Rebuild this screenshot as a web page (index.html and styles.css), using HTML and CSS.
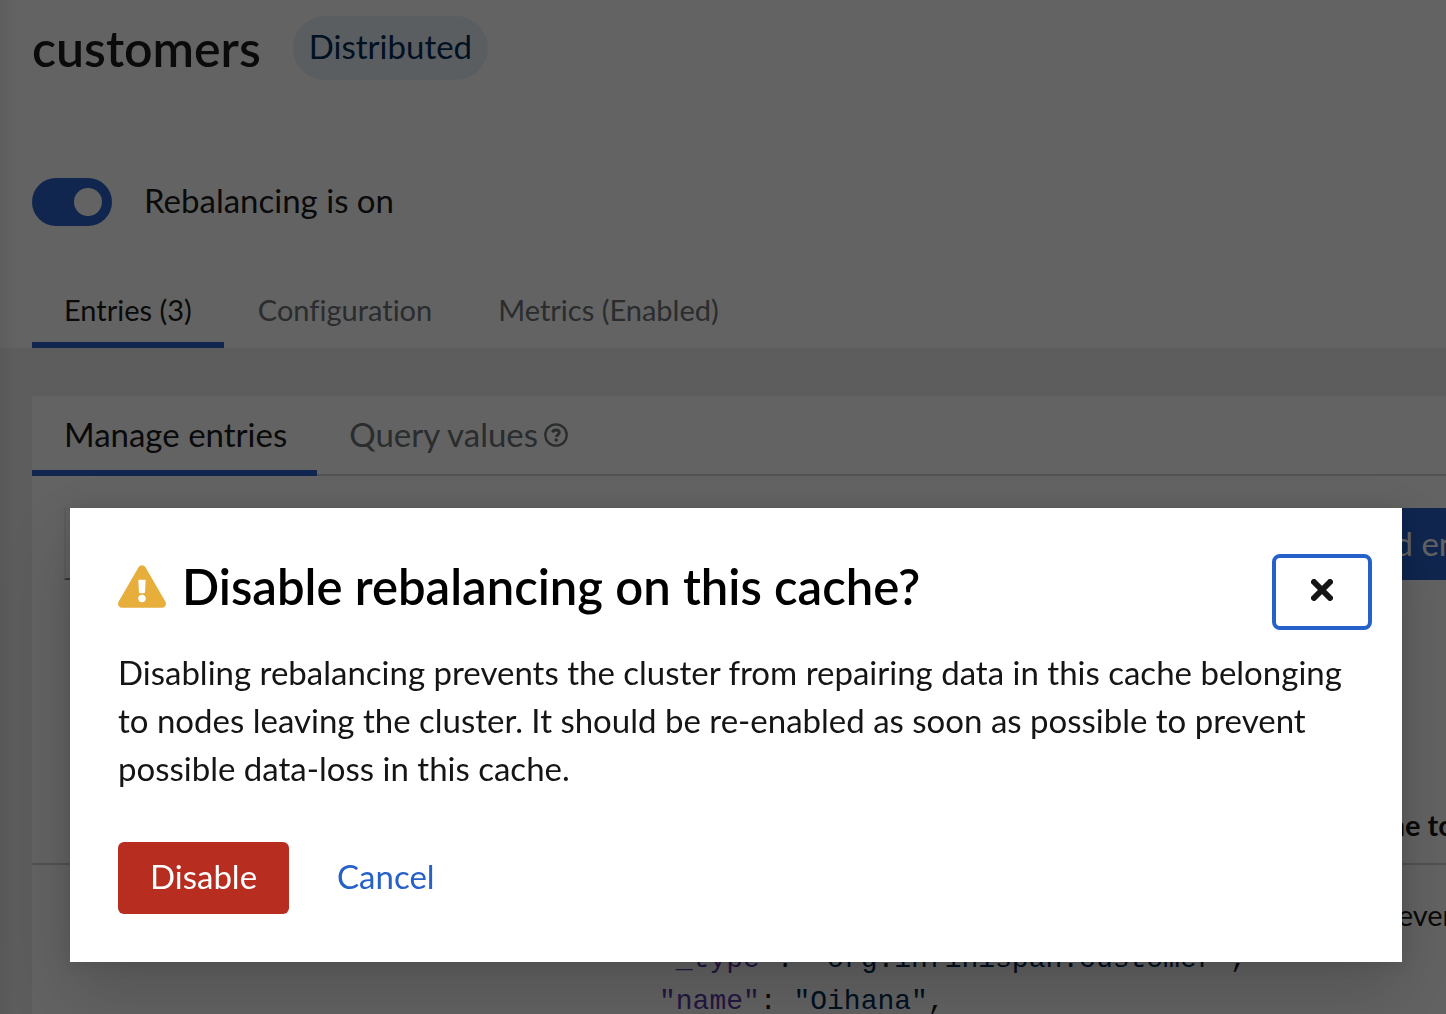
FILE: index.html
```html
<!DOCTYPE html>
<html lang="en">
<head>
<meta charset="utf-8">
<meta name="viewport" content="width=device-width, initial-scale=1">
<title>customers</title>
<link rel="stylesheet" href="styles.css">
</head>
<body>
<main class="page">
  <header class="page-header">
    <div class="title-row">
      <h1 class="page-title">customers</h1>
      <span class="badge">Distributed</span>
    </div>
    <label class="switch">
      <input class="switch-input" type="checkbox" role="switch" checked>
      <span class="switch-label">Rebalancing is on</span>
    </label>
    <nav class="tabs">
      <button class="tab tab-current" type="button">Entries (3)</button>
      <button class="tab" type="button">Configuration</button>
      <button class="tab" type="button">Metrics (Enabled)</button>
    </nav>
  </header>
  <section class="content">
    <div class="card">
      <nav class="tabs tabs-large">
        <button class="tab tab-current" type="button">Manage entries</button>
        <button class="tab" type="button">Query values<svg class="help-icon" viewBox="0 0 24 24" aria-hidden="true"><circle cx="12" cy="12" r="10.7" fill="none" stroke="currentColor" stroke-width="2.3"/><path d="M8.4 9.4C9.1 7.7 10.3 7 12 7c1.9 0 3.3 1 3.3 2.6 0 2.2-2.9 2.2-2.9 4.4" fill="none" stroke="currentColor" stroke-width="2.8"/><circle cx="12.2" cy="17" r="1.8" fill="currentColor"/></svg></button>
      </nav>
      <div class="toolbar">
        <input class="filter" type="text" aria-label="Filter entries">
        <button class="add" type="button">Add entry</button>
      </div>
      <table class="entries">
        <thead>
          <tr><th class="col-key"></th><th class="col-value"></th><th class="col-time">Time to live</th></tr>
        </thead>
        <tbody>
          <tr>
            <td></td>
            <td class="value"><pre class="code"><span class="prop">"_type"</span>: <span class="str">"org.infinispan.customer"</span>,
<span class="prop">"name"</span>: <span class="str">"Oihana"</span>,</pre></td>
            <td class="time">Never</td>
          </tr>
        </tbody>
      </table>
    </div>
  </section>
</main>
<div class="backdrop">
  <div class="modal" role="dialog" aria-modal="true" aria-labelledby="modal-title">
    <header class="modal-header">
      <svg class="warning-icon" viewBox="0 0 576 512" aria-hidden="true"><path fill="#e7ae3c" d="M569.517 440.013C587.975 472.007 564.806 512 527.94 512H48.054c-36.937 0-59.999-40.055-41.577-71.987L246.423 23.985c18.467-32.009 64.72-31.951 83.154 0l239.94 416.028zM288 354c-25.405 0-46 20.595-46 46s20.595 46 46 46 46-20.595 46-46-20.595-46-46-46zm-43.673-165.346l7.418 136c.347 6.364 5.609 11.346 11.982 11.346h48.546c6.373 0 11.635-4.982 11.982-11.346l7.418-136c.375-6.874-5.098-12.654-11.982-12.654h-63.383c-6.884 0-12.356 5.78-11.981 12.654z"/></svg>
      <h2 class="modal-title" id="modal-title">Disable rebalancing on this cache?</h2>
      <button class="close" type="button" aria-label="Close"><svg class="close-icon" viewBox="0 0 22 22" aria-hidden="true"><path d="M3 3l16 16M19 3L3 19" stroke="currentColor" stroke-width="6" stroke-linecap="round"/></svg></button>
    </header>
    <p class="modal-text">Disabling rebalancing prevents the cluster from repairing data in this cache belonging to nodes leaving the cluster. It should be re-enabled as soon as possible to prevent possible data-loss in this cache.</p>
    <footer class="modal-footer">
      <button class="btn btn-danger" type="button">Disable</button>
      <button class="btn btn-link" type="button">Cancel</button>
    </footer>
  </div>
</div>
</body>
</html>
```
FILE: styles.css
```css
* { box-sizing: border-box; }

body {
  margin: 0;
  height: 100vh;
  overflow: hidden;
  background: #f0f0f0;
  color: #151515;
  font-family: Lato, "Open Sans", sans-serif;
  font-size: 33px;
  line-height: 48px;
  font-variant-ligatures: none;
}

button, input { font: inherit; color: inherit; font-variant-ligatures: none; }
button { border: 0; background: none; white-space: nowrap; }

.page { position: relative; }

.page::after {
  content: "";
  position: absolute;
  inset: 0 auto 0 0;
  width: 16px;
  background: linear-gradient(to right, rgba(0, 0, 0, 0.06), transparent);
}

.page-header { padding: 16px 32px 0; background: #fff; }

.title-row { display: flex; align-items: center; gap: 32px; height: 64px; }
.page-title { margin: 0; font-size: 50px; font-weight: 600; line-height: 64px; }
.badge {
  height: 64px;
  padding: 6px 16px;
  border-radius: 32px;
  background: #e7f1fa;
  color: #002952;
}

.switch { display: flex; align-items: center; gap: 32px; height: 48px; margin-top: 98px; }
.switch-label { height: 52px; }
.switch-input {
  appearance: none;
  flex: none;
  width: 80px;
  height: 48px;
  margin: 0;
  padding: 10px;
  border-radius: 24px;
  background: #2660c9;
}
.switch-input::before {
  content: "";
  display: block;
  width: 28px;
  height: 28px;
  border-radius: 50%;
  background: #fff;
}
.switch-input:checked::before { margin-left: auto; }

.tabs { display: flex; gap: 2px; margin-top: 48px; font-size: 29px; }
.tab {
  height: 74px;
  padding: 4px 32px 0;
  border-bottom: 6px solid transparent;
  color: #6a6e73;
}
.tab-current { border-bottom-color: #2660c9; color: #151515; }

.content { padding: 48px 0 0 32px; }
.card { background: #fff; overflow: hidden; }
.tabs-large { gap: 0; margin-top: 0; font-size: 33px; box-shadow: inset 0 -2px #d2d2d2; }
.tabs-large .tab { height: 80px; padding: 2px 30px 0 32px; }
.help-icon { width: 24px; height: 24px; margin-left: 6px; }

.toolbar { display: flex; justify-content: space-between; padding: 32px 0 0 32px; }
.filter {
  width: 600px;
  height: 72px;
  border: 2px solid #f0f0f0;
  border-bottom-color: #8a8d90;
}
.add {
  flex: none;
  width: 180px;
  height: 72px;
  margin-right: -70px;
  padding-bottom: 4px;
  background: #2660c9;
  color: #fff;
}

.entries { width: 100%; margin-top: 206px; border-collapse: collapse; table-layout: fixed; font-size: 29px; }
.entries th { height: 78px; padding: 0; border-bottom: 2px solid #d2d2d2; text-align: left; white-space: nowrap; }
.entries td { padding: 26px 0; vertical-align: top; }
.col-key { width: 627px; }
.col-time { width: 90px; }
.entries .time { padding-left: 20px; }
.code { margin: 48px 0 0; font: 28px/42px "Liberation Mono", monospace; }
.prop { color: #5b36a8; }
.str { color: #002952; }

.backdrop {
  position: fixed;
  inset: 0;
  display: flex;
  align-items: flex-end;
  padding: 0 44px 52px 70px;
  background: rgba(3, 3, 3, 0.62);
}
.modal {
  flex: 1;
  padding: 46px 30px 48px 48px;
  background: #fff;
  box-shadow: 0 32px 64px rgba(3, 3, 3, 0.16), 0 0 16px rgba(3, 3, 3, 0.1);
}
.modal-header { display: flex; align-items: flex-start; gap: 16px; height: 76px; }
.warning-icon { flex: none; width: 48px; height: 43px; margin-top: 11px; }
.modal-title { flex: 1; margin: 0; color: #000; font-size: 49px; font-weight: 600; line-height: 64px; }
.close {
  display: grid;
  place-items: center;
  width: 100px;
  height: 76px;
  padding: 0 0 4px;
  border: 4px solid #2660c9;
  border-radius: 8px;
}
.close-icon { width: 22px; height: 22px; }
.modal-text { margin: 18px 18px 50px 0; }
.modal-footer { display: flex; gap: 16px; }
.btn { height: 72px; padding: 0 32px 4px; border-radius: 6px; }
.btn-danger { background: #b72e20; color: #fff; }
.btn-link { color: #2660c9; }
```
